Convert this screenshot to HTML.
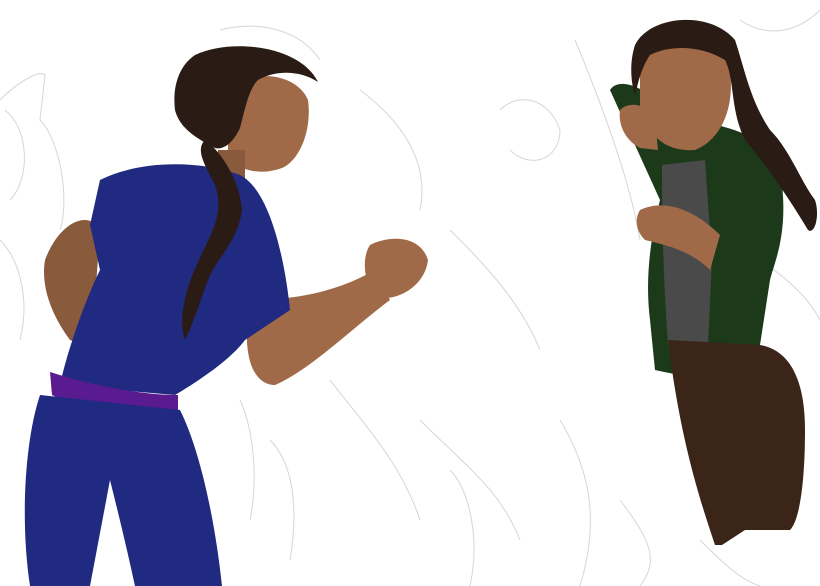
<!DOCTYPE html>
<html><head><meta charset="utf-8"><style>
html,body{margin:0;padding:0;background:#fff;width:820px;height:586px;overflow:hidden}
</style></head><body>
<svg width="820" height="586" viewBox="0 0 820 586" xmlns="http://www.w3.org/2000/svg">
<rect width="820" height="586" fill="#fff"/>
<g fill="none" stroke="#d6d6d6" stroke-width="1">
<path d="M0 100 C20 80 40 70 45 75 L40 120 C60 140 70 200 60 230"/>
<path d="M5 110 C30 130 30 180 10 200 M0 240 C20 260 30 300 20 340"/>
<path d="M240 400 C250 420 260 470 250 520 M270 440 C290 460 300 500 290 560"/>
<path d="M330 380 C360 420 400 460 420 520 M420 420 C470 470 500 490 520 540"/>
<path d="M500 110 C520 90 550 100 560 130 C560 160 530 170 510 150"/>
<path d="M575 40 C600 100 630 180 640 240"/>
<path d="M450 470 C470 490 480 540 470 586 M560 420 C590 470 600 520 580 586"/>
<path d="M620 500 C650 540 660 560 640 586 M700 540 C720 560 740 580 760 586"/>
<path d="M740 20 C770 40 800 30 820 10 M760 260 C790 280 810 300 820 320"/>
<path d="M360 90 C400 120 430 160 420 210 M450 230 C480 260 520 300 540 350"/>
<path d="M220 30 C260 20 300 30 320 60"/>
</g>
<!-- left figure -->
<path d="M45 260 C60 220 90 210 100 230 L95 300 C90 330 80 345 70 340 C55 320 40 290 45 260Z" fill="#8a5a3c"/>
<path d="M250 300 C300 300 340 290 375 270 L390 300 C350 330 310 370 275 385 C255 385 240 360 250 300Z" fill="#a06a48"/>
<path d="M370 245 C390 235 420 235 428 260 C425 285 400 300 380 298 C365 290 360 260 370 245Z" fill="#a06a48"/>
<path d="M228 90 C245 70 295 70 308 100 C312 130 300 160 282 168 C262 175 245 172 228 160Z" fill="#a06a48"/>
<path d="M218 150 L245 150 L245 185 L218 190Z" fill="#8a5a3c"/>
<path d="M100 180 C140 160 200 160 240 175 C270 190 285 260 290 310 L245 340 C230 360 200 380 175 395 L60 385 C70 340 90 290 100 270 L90 225 Z" fill="#1f2a80"/>
<path d="M50 372 C90 385 140 395 178 395 L178 418 C130 420 80 410 52 395Z" fill="#5a1a90"/>
<path d="M40 395 L180 410 C200 450 215 520 222 586 L135 586 C125 540 115 500 110 480 L90 586 L30 586 C20 520 25 440 40 395Z" fill="#1f2a80"/>
<path d="M195 55 C230 38 300 45 318 82 C300 70 275 70 258 80 C248 90 245 110 240 128 C232 145 222 150 215 148 C200 140 180 130 175 110 C172 85 180 65 195 55Z" fill="#2a1c14"/>
<path d="M205 140 C220 150 240 180 242 210 C238 240 220 255 210 275 C200 300 195 320 185 340 C178 320 185 290 198 262 C210 235 225 215 215 185 C205 165 195 150 205 140Z" fill="#2a1c14"/>
<!-- right figure -->
<path d="M610 90 C620 75 650 90 665 110 L700 120 C730 130 760 130 780 170 C790 230 775 260 770 280 L760 345 L775 370 C740 385 700 380 655 370 L650 320 C645 280 650 240 660 200 Z" fill="#1c3a1a"/>
<path d="M662 165 L705 160 L712 260 L708 345 L668 345 C665 300 662 250 662 165Z" fill="#4a4a4a"/>
<path d="M668 340 L760 345 C790 350 805 380 805 430 C805 480 800 520 790 530 L745 530 L722 545 L715 545 C700 500 680 440 668 340Z" fill="#3b2418"/>
<path d="M640 55 C655 35 720 35 730 70 C735 110 720 140 695 150 C670 152 650 140 640 110Z" fill="#a06a48"/>
<path d="M620 110 C630 100 650 105 655 120 L658 150 L640 148 C625 140 618 125 620 110Z" fill="#a06a48"/>
<path d="M640 210 C660 200 690 205 720 235 L710 270 C690 250 665 245 645 240 C635 230 635 218 640 210Z" fill="#a06a48"/>
<path d="M635 45 C650 15 710 10 735 40 C745 70 750 100 770 130 C790 150 800 180 815 200 C820 215 815 235 808 230 C790 200 770 170 745 140 C730 110 735 80 725 60 C700 45 670 45 650 55 C640 70 638 85 635 95 C630 80 630 60 635 45Z" fill="#2a1c14"/>
</svg>
</body></html>
